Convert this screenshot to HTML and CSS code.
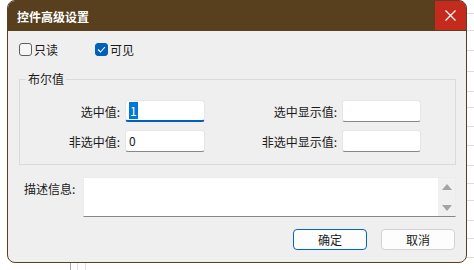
FILE: index.html
```html
<!DOCTYPE html>
<html lang="zh-CN">
<head>
  <meta charset="UTF-8" />
  <meta name="viewport" content="width=device-width, initial-scale=1.0"/>
  <title>控件高级设置</title>
  <link rel="stylesheet" href="styles.css">
</head>
<body>

  <!-- sheet behind the dialog -->
  <div class="sheet">
    <div class="gutter"></div>
    <div class="gutter thin"></div>
    <div class="gutter thin wide"></div>
    <div class="rows">
      <div class="row h14"></div>
      <div class="row h17"></div>
      <div class="row h20"></div>
      <div class="row h21"></div>
      <div class="row h20"></div>
      <div class="row h16"></div>
      <div class="row h19"></div>
      <div class="row h19"></div>
      <div class="row h20"></div>
      <div class="row h18"></div>
      <div class="row h17"></div>
      <div class="row h20"></div>
      <div class="row h18"></div>
      <div class="row h19"></div>
    </div>
  </div>

  <div class="dialog">
    <div class="titlebar">
      <span class="title">控件高级设置</span>
      <div class="close">
        <svg width="11" height="11" viewBox="0 0 11 11">
          <path d="M0.5 0.5 L10.5 10.5 M10.5 0.5 L0.5 10.5" stroke="#fff" stroke-width="1.2" fill="none"/>
        </svg>
      </div>
    </div>

    <div class="content">
      <div class="checks">
        <label class="check">
          <span class="box"></span>只读
        </label>
        <label class="check">
          <span class="box on">
            <svg width="9" height="7" viewBox="0 0 9 7">
              <path d="M1 3.5 L3.5 6 L8 1" stroke="#fff" stroke-width="1.1" fill="none"/>
            </svg>
          </span>可见
        </label>
      </div>

      <fieldset class="group">
        <legend>布尔值</legend>
        <div class="fields">
          <span class="field-label">选中值:</span>
          <div class="input focus"><span class="sel">1</span></div>
          <span class="field-label">选中显示值:</span>
          <div class="input"></div>

          <span class="field-label">非选中值:</span>
          <div class="input">0</div>
          <span class="field-label">非选中显示值:</span>
          <div class="input"></div>
        </div>
      </fieldset>

      <div class="desc">
        <span class="desc-label">描述信息:</span>
        <div class="memo">
          <div class="scroll">
            <span class="arrow up"></span>
            <span class="arrow down"></span>
          </div>
        </div>
      </div>

      <div class="buttons">
        <button class="btn primary">确定</button>
        <button class="btn">取消</button>
      </div>
    </div>
  </div>

</body>
</html>
```

FILE: styles.css
```css
body {
  margin: 0;
  background: #ffffff;
  font-family: "Noto Sans CJK SC", "Noto Sans", sans-serif;
  font-size: 12px;
  color: #1a1a1a;
  overflow: hidden;
}

/* background sheet */
.sheet {
  display: flex;
  height: 270px;
}

.gutter {
  box-sizing: border-box;
  width: 71px;
  border-right: 1px solid #a8a8a8;
}

.gutter.thin {
  width: 7px;
  border-right-color: #e2e2e2;
}

.gutter.wide {
  width: 8px;
}

.rows {
  flex: 1;
}

.row {
  box-sizing: border-box;
  border-bottom: 1px solid #dcdcdc;
}

.h14 { height: 14px; }
.h16 { height: 16px; }
.h17 { height: 17px; }
.h18 { height: 18px; }
.h19 { height: 19px; }
.h20 { height: 20px; }
.h21 { height: 21px; }

/* dialog window */
.dialog {
  position: absolute;
  top: 0;
  left: 7px;
  box-sizing: border-box;
  width: 460px;
  height: 263px;
  border: 1px solid #5a4021;
  border-radius: 8px;
  overflow: hidden;
  background: #efefef;
}

.titlebar {
  display: flex;
  align-items: center;
  height: 30px;
  padding-left: 9px;
  background: #583f1e;
  color: #ffffff;
}

.title {
  font-weight: bold;
  font-size: 12px;
}

.close {
  display: flex;
  align-items: center;
  justify-content: center;
  align-self: flex-start;
  margin-left: auto;
  width: 31px;
  height: 29px;
  background: #c42b1c;
}

.content {
  padding: 12px 10px 0 11px;
}

.checks {
  display: flex;
  height: 13px;
  align-items: center;
}

.check {
  display: flex;
  align-items: center;
  gap: 2px;
  width: 76px;
  line-height: 14px;
}

.box {
  box-sizing: border-box;
  display: flex;
  align-items: center;
  justify-content: center;
  width: 13px;
  height: 13px;
  border: 1px solid #5f5f5f;
  border-radius: 3px;
  background: #f6f6f6;
}

.box.on {
  border-color: #005fb8;
  background: #005fb8;
}

/* group box */
.group {
  margin: 16px 0 0;
  padding: 0 0 12px 6px;
  border: 1px solid #dadada;
  min-width: 0;
}

.group legend {
  padding: 0 2px;
  line-height: 14px;
}

.fields {
  display: grid;
  grid-template-columns: 99px 80px 137px 79px;
  grid-auto-rows: 22px;
  row-gap: 8px;
  margin-top: 14px;
  align-items: center;
}

.field-label {
  text-align: right;
  padding-right: 5px;
}

.input {
  box-sizing: border-box;
  height: 22px;
  padding: 0 3px;
  background: #ffffff;
  border: 1px solid #e6e6e6;
  border-bottom-color: #878787;
  border-radius: 3px;
  line-height: 20px;
}

.input.focus {
  border-bottom: 2px solid #005fb8;
}

.sel {
  background: #0078d7;
  color: #ffffff;
  padding: 0 1px;
}

/* description */
.desc {
  display: flex;
  margin-top: 12px;
}

.desc-label {
  width: 59px;
  padding: 5px 0 0 5px;
  line-height: 14px;
}

.memo {
  box-sizing: border-box;
  display: flex;
  justify-content: flex-end;
  width: 373px;
  height: 40px;
  background: #ffffff;
  border: 1px solid #ececec;
  border-bottom-color: #878787;
}

.scroll {
  display: flex;
  flex-direction: column;
  justify-content: space-between;
  align-items: center;
  width: 17px;
  padding: 6px 0 5px;
  background: #f0f0f0;
}

.arrow {
  width: 0;
  height: 0;
  border-left: 5px solid transparent;
  border-right: 5px solid transparent;
}

.arrow.up {
  border-bottom: 6px solid #a4a4a4;
}

.arrow.down {
  border-top: 6px solid #a4a4a4;
}

/* buttons */
.buttons {
  display: flex;
  justify-content: flex-end;
  gap: 14px;
  margin-top: 12px;
  padding-right: 1px;
}

.btn {
  width: 74px;
  height: 21px;
  padding: 0;
  font-family: inherit;
  font-size: 12px;
  color: #1a1a1a;
  background: #fdfdfd;
  border: 1px solid #d2d2d2;
  border-radius: 4px;
}

.btn.primary {
  border-color: #0067c0;
}
```
